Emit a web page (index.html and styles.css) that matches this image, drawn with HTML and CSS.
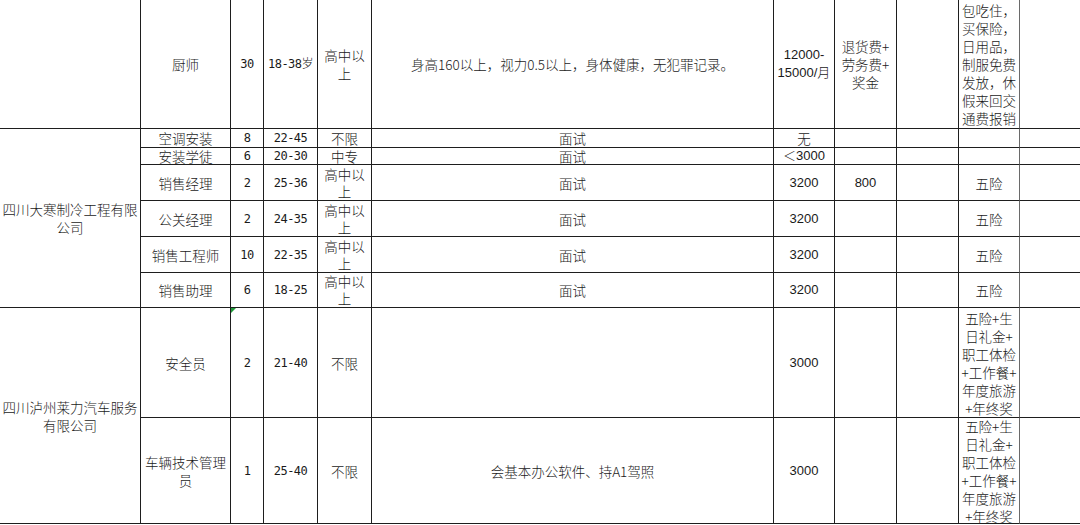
FILE: index.html
```html
<!DOCTYPE html>
<html lang="zh-CN">
<head>
<meta charset="utf-8">
<title>招聘信息表</title>
<link rel="stylesheet" href="styles.css">
</head>
<body>
<div class="sheet">
  <!-- row 0 -->
  <div class="c"></div>
  <div class="c">厨师</div>
  <div class="c num">30</div>
  <div class="c num">18-38岁</div>
  <div class="c">高中以<br>上</div>
  <div class="c">身高160以上，视力0.5以上，身体健康，无犯罪记录。</div>
  <div class="c sal">12000-<br>15000/月</div>
  <div class="c">退货费+<br>劳务费+<br>奖金</div>
  <div class="c"></div>
  <div class="c g">包吃住，<br>买保险，<br>日用品，<br>制服免费<br>发放，休<br>假来回交<br>通费报销</div>
  <div class="c e"></div>

  <!-- company 1 -->
  <div class="c span6">四川大寒制冷工程有限<br>公司</div>
  <div class="c s">空调安装</div>
  <div class="c s num">8</div>
  <div class="c s num">22-45</div>
  <div class="c s">不限</div>
  <div class="c s">面试</div>
  <div class="c s">无</div>
  <div class="c s"></div>
  <div class="c s"></div>
  <div class="c s g"></div>
  <div class="c s e"></div>

  <div class="c s">安装学徒</div>
  <div class="c s num">6</div>
  <div class="c s num">20-30</div>
  <div class="c s">中专</div>
  <div class="c s">面试</div>
  <div class="c s sal">＜3000</div>
  <div class="c s"></div>
  <div class="c s"></div>
  <div class="c s g"></div>
  <div class="c s e"></div>

  <div class="c">销售经理</div>
  <div class="c num">2</div>
  <div class="c num">25-36</div>
  <div class="c tight">高中以<br>上</div>
  <div class="c">面试</div>
  <div class="c sal">3200</div>
  <div class="c sal">800</div>
  <div class="c"></div>
  <div class="c g">五险</div>
  <div class="c e"></div>

  <div class="c">公关经理</div>
  <div class="c num">2</div>
  <div class="c num">24-35</div>
  <div class="c tight">高中以<br>上</div>
  <div class="c">面试</div>
  <div class="c sal">3200</div>
  <div class="c"></div>
  <div class="c"></div>
  <div class="c g">五险</div>
  <div class="c e"></div>

  <div class="c">销售工程师</div>
  <div class="c num">10</div>
  <div class="c num">22-35</div>
  <div class="c tight">高中以<br>上</div>
  <div class="c">面试</div>
  <div class="c sal">3200</div>
  <div class="c"></div>
  <div class="c"></div>
  <div class="c g">五险</div>
  <div class="c e"></div>

  <div class="c">销售助理</div>
  <div class="c num">6</div>
  <div class="c num">18-25</div>
  <div class="c tight">高中以<br>上</div>
  <div class="c">面试</div>
  <div class="c sal">3200</div>
  <div class="c"></div>
  <div class="c"></div>
  <div class="c g">五险</div>
  <div class="c e"></div>

  <!-- company 2 -->
  <div class="c span2">四川泸州莱力汽车服务<br>有限公司</div>
  <div class="c">安全员</div>
  <div class="c num flag">2</div>
  <div class="c num">21-40</div>
  <div class="c">不限</div>
  <div class="c"></div>
  <div class="c sal">3000</div>
  <div class="c"></div>
  <div class="c"></div>
  <div class="c g">五险+生<br>日礼金+<br>职工体检<br>+工作餐+<br>年度旅游<br>+年终奖</div>
  <div class="c e"></div>

  <div class="c">车辆技术管理<br>员</div>
  <div class="c num">1</div>
  <div class="c num">25-40</div>
  <div class="c">不限</div>
  <div class="c">会基本办公软件、持A1驾照</div>
  <div class="c sal">3000</div>
  <div class="c"></div>
  <div class="c"></div>
  <div class="c g">五险+生<br>日礼金+<br>职工体检<br>+工作餐+<br>年度旅游<br>+年终奖</div>
  <div class="c e"></div>
</div>
</body>
</html>
```

FILE: styles.css
```css
html, body {
  margin: 0;
  padding: 0;
  background: #ffffff;
}

body {
  width: 1080px;
  height: 525px;
  overflow: hidden;
  font-family: "Noto Sans CJK SC", "Liberation Sans", sans-serif;
  font-size: 13.5px;
  font-weight: 300;
  color: #1a1a1a;
}

.sheet {
  display: grid;
  grid-template-columns: 141px 90px 33px 54px 54px 402px 61px 62px 62px 61px 60px;
  grid-template-rows: 129px 19px 17px 36px 36px 36px 35px 110px 106px;
}

.c {
  box-sizing: border-box;
  border-right: 1px solid #1e1e1e;
  border-bottom: 1px solid #1e1e1e;
  display: flex;
  align-items: center;
  justify-content: center;
  text-align: center;
  white-space: nowrap;
  line-height: 18px;
  overflow: hidden;
  position: relative;
}

.c.s {
  line-height: 16px;
}

.c.e {
  border-right: none;
}

.c.g {
  border-right-color: #6a6a6a;
}

.c.tight {
  line-height: 17px;
}

.num {
  font-family: "DejaVu Sans Mono", "Noto Sans CJK SC", monospace;
  font-size: 12px;
  letter-spacing: -0.5px;
}

.sal {
  font-family: "Liberation Sans", "Noto Sans CJK SC", sans-serif;
  font-size: 13px;
}

.span6 {
  grid-row: span 6;
}

.span2 {
  grid-row: span 2;
}

.flag::before {
  content: "";
  position: absolute;
  left: 0;
  top: 0;
  width: 0;
  height: 0;
  border-top: 5px solid #1f9a3a;
  border-right: 5px solid transparent;
}
```
